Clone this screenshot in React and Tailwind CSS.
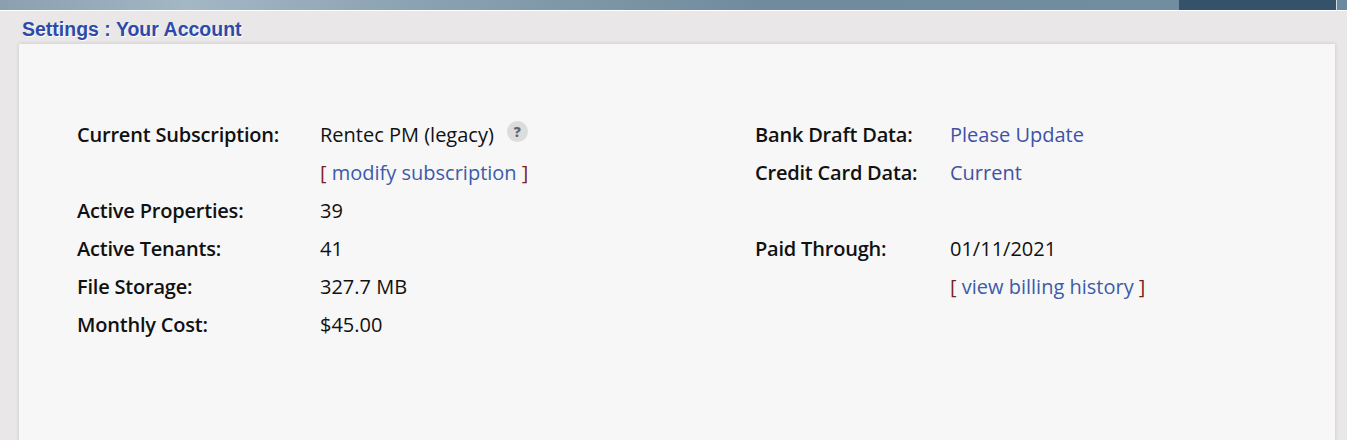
const rows = [
  ["Current Subscription:", <span className="flex items-start">Rentec PM (legacy)<span className="ml-[13px] mt-[5px] flex h-[21px] w-[21px] items-center justify-center rounded-full bg-[#dcdcdc] text-[14px] font-extrabold leading-none text-[#666]">?</span></span>, "Bank Draft Data:", <a className="text-[#3f51a5]">Please Update</a>],
  ["", <span className="text-[#7a1f1f]">[ <a className="text-[#3c5ba9]">modify subscription</a> ]</span>, "Credit Card Data:", <a className="text-[#3f51a5]">Current</a>],
  ["Active Properties:", "39", "", ""],
  ["Active Tenants:", "41", "Paid Through:", "01/11/2021"],
  ["File Storage:", "327.7 MB", "", <span className="text-[#7a1f1f]">[ <a className="text-[#3c5ba9]">view billing history</a> ]</span>],
  ["Monthly Cost:", "$45.00", "", ""],
];

export default function App() {
  return (
    <div className="h-[440px] overflow-hidden bg-[#eae7e8] font-['Open_Sans',sans-serif]">
      <div className="flex h-[11px] border-b border-white">
        <div className="flex-1 bg-[linear-gradient(90deg,#8aa0ae_0%,#a3b7c5_16%,#8ba2b2_35%,#6f8b9d_65%,#718da0_100%)]" />
        <div className="w-[157px] bg-[#34536b]" />
        <div className="w-[11px] border-l border-white/70 bg-[#6b8aa0]" />
      </div>
      <h1 className="ml-[22px] mt-[7px] h-[26px] font-['Liberation_Sans',sans-serif] text-[19.5px] font-bold leading-[23px] text-[#2c4ba8] [text-shadow:1px_1px_0_#fff]">
        Settings : Your Account
      </h1>
      <div className="ml-[19px] mr-[12px] h-[400px] bg-[#f7f7f7] pl-[58px] pt-[72px] shadow-[0_0_4px_rgba(0,0,0,0.15)]">
        <div className="grid grid-cols-[243px_435px_195px_1fr] auto-rows-[38px] items-center text-[20px] leading-[38px] text-[#111]">
          {rows.map((r, i) => (
            <div key={i} className="contents">
              <div className="font-semibold tracking-[-0.2px]">{r[0]}</div>
              <div>{r[1]}</div>
              <div className="font-semibold tracking-[-0.2px]">{r[2]}</div>
              <div>{r[3]}</div>
            </div>
          ))}
        </div>
      </div>
    </div>
  );
}
